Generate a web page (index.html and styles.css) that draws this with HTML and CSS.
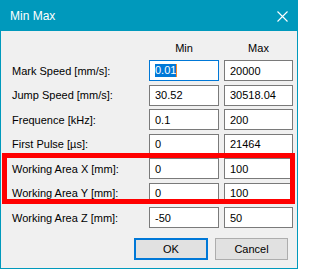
FILE: index.html
```html
<!DOCTYPE html>
<html>
<head>
<meta charset="utf-8">
<title>Min Max</title>
<link rel="stylesheet" href="styles.css">
</head>
<body>
<div class="window">
  <div class="titlebar">
    <span class="title">Min Max</span>
    <svg class="close" width="11" height="11" viewBox="0 0 11 11"><path d="M0.5 0.5L10.5 10.5M10.5 0.5L0.5 10.5" stroke="#fff" stroke-width="1.1" fill="none"/></svg>
  </div>
  <div class="content">
    <div class="head"><span></span><span>Min</span><span>Max</span></div>
    <div class="form">
      <span class="lbl">Mark Speed [mm/s]:</span><div class="tb focus"><span class="sel">0.01</span><span class="caret"></span></div><div class="tb">20000</div>
      <span class="lbl">Jump Speed [mm/s]:</span><div class="tb">30.52</div><div class="tb">30518.04</div>
      <span class="lbl">Frequence [kHz]:</span><div class="tb">0.1</div><div class="tb">200</div>
      <span class="lbl">First Pulse [µs]:</span><div class="tb">0</div><div class="tb">21464</div>
      <span class="lbl">Working Area X [mm]:</span><div class="tb">0</div><div class="tb">100</div>
      <span class="lbl">Working Area Y [mm]:</span><div class="tb">0</div><div class="tb">100</div>
      <span class="lbl">Working Area Z [mm]:</span><div class="tb">-50</div><div class="tb">50</div>
    </div>
    <div class="buttons">
      <button class="btn ok">OK</button>
      <button class="btn cancel">Cancel</button>
    </div>
  </div>
  <div class="highlight"></div>
</div>
</body>
</html>
```
FILE: styles.css
```css
html, body {
  margin: 0;
  padding: 0;
}
body {
  width: 298px;
  height: 269px;
  font-family: "Liberation Sans", Arial, sans-serif;
  color: #000;
}
.window {
  position: relative;
  box-sizing: border-box;
  width: 298px;
  height: 269px;
  border: 1px solid #0099bc;
  background: #f0f0f0;
}
.titlebar {
  height: 30px;
  background: #0099bc;
  display: flex;
  align-items: center;
  justify-content: space-between;
  padding: 0 9px;
  color: #fff;
}
.title {
  font-size: 12px;
}
.close {
  display: block;
}
.content {
  padding: 11px 9px 0 11px;
}
.head {
  display: grid;
  grid-template-columns: 132px 70px 69px;
  column-gap: 5px;
  font-size: 11px;
  line-height: 13px;
  text-align: center;
  margin-bottom: 5px;
}
.form {
  display: grid;
  grid-template-columns: 132px 70px 69px;
  column-gap: 5px;
  grid-auto-rows: 21px;
  row-gap: 3.5px;
  align-items: center;
  font-size: 11px;
}
.tb {
  box-sizing: border-box;
  height: 21px;
  border: 1px solid #7a7a7a;
  background: #fff;
  padding-left: 5px;
  display: flex;
  align-items: center;
}
.tb.focus {
  border-color: #0078d7;
}
.sel {
  background: #0078d7;
  color: #fff;
  line-height: 13px;
}
.caret {
  width: 1px;
  height: 13px;
  background: #ff8828;
}
.buttons {
  display: flex;
  justify-content: flex-end;
  gap: 7px;
  margin-top: 10px;
}
.btn {
  box-sizing: border-box;
  height: 22px;
  margin: 0;
  padding: 0;
  background: #e1e1e1;
  border: 1px solid #adadad;
  font-family: "Liberation Sans", Arial, sans-serif;
  font-size: 11px;
  color: #000;
}
.btn.ok {
  width: 74px;
  border: 2px solid #0078d7;
}
.btn.cancel {
  width: 73px;
}
.highlight {
  position: absolute;
  left: 1px;
  top: 152px;
  width: 293px;
  height: 51px;
  box-sizing: border-box;
  border: 5px solid #ff0000;
}
```
